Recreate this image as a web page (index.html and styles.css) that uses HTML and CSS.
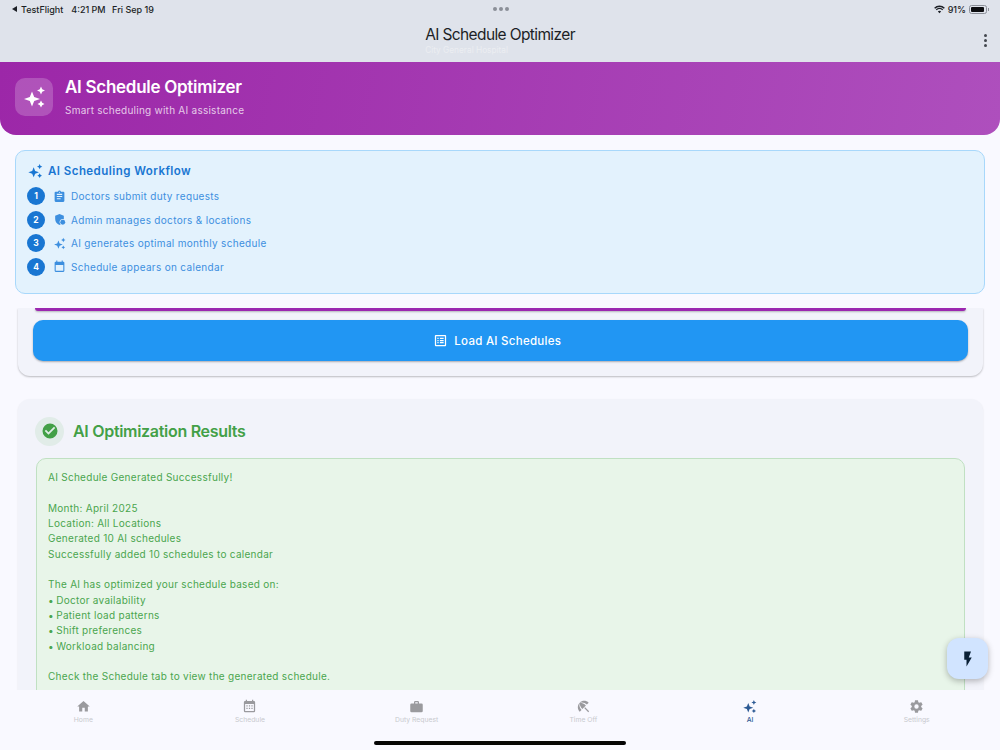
FILE: index.html
```html
<!DOCTYPE html>
<html lang="en">
<head>
<meta charset="utf-8">
<title>AI Schedule Optimizer</title>
<link rel="stylesheet" href="styles.css">
</head>
<body>
<div class="app">
  <header class="appbar">
    <div class="status">
      <div class="status-left"><span class="back-tri"></span><span>TestFlight</span><span class="gap-time">4:21 PM</span><span class="gap-date">Fri Sep 19</span></div>
      <div class="dots"><i></i><i></i><i></i></div>
      <div class="status-right">
        <svg class="wifi" viewBox="0 0 16 12" width="11" height="9"><path d="M8 11.5 5.6 8.9a3.4 3.4 0 0 1 4.8 0L8 11.500zM3.900 7.200a5.800 5.800 0 0 1 8.200 0l1.300-1.400a7.700 7.700 0 0 0-10.800 0zM.2 3.500l1.500 1.500a8.900 8.900 0 0 1 12.600 0l1.500-1.500a11 11 0 0 0-15.600 0z" fill="#1c1f26"/></svg>
        <span>91%</span>
        <span class="battery"><span class="battery-fill"></span></span><span class="battery-cap"></span>
      </div>
    </div>
    <div class="titlebar">
      <div class="title-stack">
        <div class="title">AI Schedule Optimizer</div>
        <div class="subtitle">City General Hospital</div>
      </div>
      <div class="more"><i></i><i></i><i></i></div>
    </div>
  </header>

  <section class="hero">
    <div class="hero-icon">
      <svg viewBox="0 0 24 24" width="24" height="24"><use href="#sparkle"/></svg>
    </div>
    <div>
      <h1 class="hero-title">AI Schedule Optimizer</h1>
      <p class="hero-sub">Smart scheduling with AI assistance</p>
    </div>
  </section>

  <section class="workflow">
    <div class="wf-head">
      <svg class="wf-head-icon" viewBox="0 0 24 24" width="16" height="16"><use href="#sparkle"/></svg>
      <h2 class="wf-title">AI Scheduling Workflow</h2>
    </div>
    <ul class="wf-list">
      <li class="wf-row"><span class="num">1</span>
        <svg class="wf-icon" viewBox="0 0 24 24" width="13" height="13"><path d="M19 3h-4.200a3 3 0 0 0-5.600 0H5a2 2 0 0 0-2 2v15a2 2 0 0 0 2 2h14a2 2 0 0 0 2-2V5a2 2 0 0 0-2-2zm-7 0a1 1 0 1 1 0 2 1 1 0 0 1 0-2zm2 14H7v-2h7zm3-4H7v-2h10zm0-4H7V7h10z"/></svg>
        <span>Doctors submit duty requests</span></li>
      <li class="wf-row"><span class="num">2</span>
        <svg class="wf-icon" viewBox="0 0 24 24" width="13" height="13"><path d="M12 2 4 5v6c0 5 3.400 9.700 8 11 .9-.3 1.700-.7 2.500-1.200A6 6 0 0 1 12 17a6 6 0 0 1 8-5.600V5z"/><circle cx="18" cy="17" r="4.500"/></svg>
        <span>Admin manages doctors &amp; locations</span></li>
      <li class="wf-row"><span class="num">3</span>
        <svg class="wf-icon" viewBox="0 0 24 24" width="13" height="13"><use href="#sparkle"/></svg>
        <span>AI generates optimal monthly schedule</span></li>
      <li class="wf-row"><span class="num">4</span>
        <svg class="wf-icon" viewBox="0 0 24 24" width="13" height="13"><path d="M19 3h-1V1h-2v2H8V1H6v2H5a2 2 0 0 0-2 2v15a2 2 0 0 0 2 2h14a2 2 0 0 0 2-2V5a2 2 0 0 0-2-2zm0 17H5V9h14z"/></svg>
        <span>Schedule appears on calendar</span></li>
    </ul>
  </section>

  <main class="scroller">
    <div class="controls-card">
      <div class="purple-btn"></div>
      <button class="load-btn">
        <svg viewBox="0 0 24 24" width="15" height="15"><path d="M4.500 3h15A1.500 1.500 0 0 1 21 4.500v15a1.500 1.500 0 0 1-1.500 1.500h-15A1.500 1.500 0 0 1 3 19.500v-15A1.500 1.500 0 0 1 4.500 3zM5 5v14h14V5zm2 2.500h2v2H7zm4 0h6v2h-6zM7 11h2v2H7zm4 0h6v2h-6zm-4 3.500h2v2H7zm4 0h6v2h-6z" fill="#fff" fill-rule="evenodd"/></svg>
        <span>Load AI Schedules</span>
      </button>
    </div>
    <div class="results-card">
      <div class="results-head">
        <span class="check-wrap">
          <svg viewBox="0 0 24 24" width="18" height="18"><path d="M12 2a10 10 0 1 0 0 20 10 10 0 0 0 0-20zm-2 15-5-5 1.700-1.700L10 13.600l7.300-7.300L19 8z" fill="#43a047"/></svg>
        </span>
        <h2 class="results-title">AI Optimization Results</h2>
      </div>
      <div class="results-box">
        <p>AI Schedule Generated Successfully!</p>
        <p class="blank"></p>
        <p>Month: April 2025</p>
        <p>Location: All Locations</p>
        <p>Generated 10 AI schedules</p>
        <p>Successfully added 10 schedules to calendar</p>
        <p class="blank"></p>
        <p>The AI has optimized your schedule based on:</p>
        <p><span class="bullet">•</span> Doctor availability</p>
        <p><span class="bullet">•</span> Patient load patterns</p>
        <p><span class="bullet">•</span> Shift preferences</p>
        <p><span class="bullet">•</span> Workload balancing</p>
        <p class="blank"></p>
        <p>Check the Schedule tab to view the generated schedule.</p>
      </div>
    </div>
  </main>

  <nav class="tabs">
    <div class="tab">
      <svg viewBox="0 0 24 24" width="15" height="15"><path d="M10 20v-6h4v6h5v-8h3L12 3 2 12h3v8z"/></svg>
      <span>Home</span></div>
    <div class="tab">
      <svg viewBox="0 0 24 24" width="15" height="15"><path d="M19 3h-1V1h-2v2H8V1H6v2H5a2 2 0 0 0-2 2v14a2 2 0 0 0 2 2h14a2 2 0 0 0 2-2V5a2 2 0 0 0-2-2zm0 16H5V8h14zM7 10h2v2H7zm4 0h2v2h-2zm4 0h2v2h-2zm-8 4h2v2H7zm4 0h2v2h-2zm4 0h2v2h-2z"/></svg>
      <span>Schedule</span></div>
    <div class="tab">
      <svg viewBox="0 0 24 24" width="15" height="15"><path d="M20 7h-4V5a2 2 0 0 0-2-2h-4a2 2 0 0 0-2 2v2H4a2 2 0 0 0-2 2v10a2 2 0 0 0 2 2h16a2 2 0 0 0 2-2V9a2 2 0 0 0-2-2zM10 5h4v2h-4z"/></svg>
      <span>Duty Request</span></div>
    <div class="tab">
      <svg viewBox="0 0 24 24" width="15" height="15"><path d="m13.130 14.560 1.430-1.430 6.440 6.440L19.570 21zM17.420 8.830l2.860-2.860C16.340 2 9.930 2 5.980 5.950c3.930-1.300 8.310-.25 11.440 2.880zM5.950 5.980C2 9.930 2 16.340 5.970 20.280l2.860-2.860C5.700 14.290 4.650 9.910 5.950 5.980zM5.970 5.960c-.5 3 1.060 6.880 4.180 10.010l5.730-5.730C12.750 7.120 8.900 5.480 5.970 5.960z"/></svg>
      <span>Time Off</span></div>
    <div class="tab tab-active">
      <svg viewBox="0 0 24 24" width="15" height="15"><use href="#sparkle"/></svg>
      <span>AI</span></div>
    <div class="tab">
      <svg viewBox="0 0 24 24" width="15" height="15"><path d="M19.430 12.980c.04-.32.07-.64.07-.98s-.03-.66-.07-.98l2.110-1.650a.5.5 0 0 0 .12-.64l-2-3.460a.5.5 0 0 0-.61-.22l-2.490 1a7.300 7.300 0 0 0-1.690-.98l-.38-2.650A.49.49 0 0 0 14 2h-4a.49.49 0 0 0-.49.42l-.38 2.650c-.61.25-1.170.59-1.690.98l-2.490-1a.5.5 0 0 0-.61.22l-2 3.460a.49.49 0 0 0 .12.64l2.110 1.650c-.04.32-.07.65-.07.98s.03.66.07.98l-2.110 1.650a.5.5 0 0 0-.12.64l2 3.460c.12.22.39.3.61.22l2.490-1c.52.4 1.080.73 1.690.98l.38 2.650c.03.24.24.42.49.42h4c.25 0 .46-.18.49-.42l.38-2.650c.61-.25 1.170-.59 1.690-.98l2.490 1c.23.09.49 0 .61-.22l2-3.460a.5.5 0 0 0-.12-.64zM12 15.500a3.500 3.500 0 1 1 0-7 3.500 3.500 0 0 1 0 7z"/></svg>
      <span>Settings</span></div>
  </nav>

  <button class="fab" aria-label="Quick action">
    <svg viewBox="0 0 24 24" width="18" height="18"><path d="M7 2v11h3v9l7-12h-4l3-8z" fill="#0a2036"/></svg>
  </button>
  <div class="home-bar"></div>
</div>

<svg class="defs" width="0" height="0" aria-hidden="true">
  <symbol id="sparkle" viewBox="0 0 24 24">
    <path d="M10 6.500 12.200 12 18 14l-5.800 2L10 21.500 7.800 16 2 14l5.800-2zM19 1.500l1.200 2.800L23 5.500l-2.800 1.200L19 9.500l-1.200-2.800L15 5.500l2.800-1.200zM19 15.500l1.200 2.300 2.300 1.200-2.300 1.200L19 22.500l-1.200-2.300-2.300-1.200 2.300-1.200z"/>
  </symbol>
</svg>
</body>
</html>
```

FILE: styles.css
```css
* { box-sizing: border-box; }
html, body { margin: 0; padding: 0; }
body {
  width: 1000px;
  height: 750px;
  overflow: hidden;
  font-family: Inter, "Liberation Sans", sans-serif;
  background: #f9f9ff;
}
.defs { position: absolute; }
h1, h2, p, ul { margin: 0; padding: 0; }
ul { list-style: none; }

.app {
  position: relative;
  width: 1000px;
  height: 750px;
  display: flex;
  flex-direction: column;
  background: #f9f9ff;
}

/* App bar */
.appbar {
  height: 62px;
  flex: none;
  background: #dfe3eb;
  display: flex;
  flex-direction: column;
}
.status {
  height: 18px;
  padding: 0 11px 0 12px;
  display: grid;
  grid-template-columns: 1fr auto 1fr;
  align-items: center;
  font-size: 9px;
  font-weight: 500;
  color: #1c1f26;
}
.status-left { display: flex; align-items: center; }
.back-tri {
  width: 0;
  height: 0;
  border-style: solid;
  border-width: 3px 5px 3px 0;
  border-color: transparent #1c1f26 transparent transparent;
  margin-right: 4px;
}
.gap-time { margin-left: 8px; }
.gap-date { margin-left: 6.500px; }
.dots { display: flex; gap: 2px; }
.dots i { width: 4px; height: 4px; border-radius: 50%; background: #8b8f98; }
.status-right { display: flex; align-items: center; justify-content: flex-end; gap: 3px; }
.battery {
  width: 18px;
  height: 9px;
  border: 1px solid #8b8f98;
  border-radius: 2.500px;
  padding: 1px;
  display: block;
}
.battery-fill { display: block; width: 90%; height: 100%; background: #0c0d10; border-radius: 1px; }
.battery-cap { width: 1px; height: 3px; background: #8b8f98; margin-left: -2px; }

.titlebar {
  flex: 1;
  display: flex;
  justify-content: center;
  position: relative;
  padding-top: 7px;
}
.title-stack { display: flex; flex-direction: column; }
.title { font-size: 15.500px; line-height: 20px; letter-spacing: -.62px; color: #1c1f26; }
.subtitle { font-size: 8.300px; line-height: 11px; color: #eceef2; margin-top: 0; }
.more {
  position: absolute;
  right: 13.500px;
  top: 16px;
  display: flex;
  flex-direction: column;
  gap: 2px;
}
.more i { width: 3px; height: 3px; border-radius: 50%; background: #43474e; }

/* Hero */
.hero {
  height: 73px;
  flex: none;
  background: linear-gradient(100deg, #9c27a8, #ae4fbd);
  border-radius: 0 0 16px 16px;
  padding: 0 15px 4px;
  display: flex;
  align-items: center;
  gap: 12px;
}
.hero-icon {
  width: 38px;
  height: 38px;
  border-radius: 10px;
  background: rgba(255, 255, 255, .2);
  display: flex;
  align-items: center;
  justify-content: center;
  color: #fff;
  fill: #fff;
}
.hero-title { font-size: 17px; line-height: 23px; font-weight: 600; letter-spacing: -.28px; color: #fff; }
.hero-sub { font-size: 10px; line-height: 14px; margin-top: 4px; letter-spacing: .25px; color: rgba(255, 255, 255, .75); }

/* Workflow */
.workflow {
  flex: none;
  height: 144px;
  margin: 15px 15px 14px;
  padding: 11px 11px;
  background: #e3f2fd;
  border: 1px solid #a8d8fb;
  border-radius: 10px;
}
.wf-head { display: flex; align-items: center; gap: 5px; height: 18px; }
.wf-head-icon { fill: #1976d2; }
.wf-title { font-size: 11.500px; font-weight: 600; letter-spacing: .45px; color: #1976d2; }
.wf-list { margin-top: 7.500px; display: flex; flex-direction: column; gap: 6px; }
.wf-row {
  display: flex;
  align-items: center;
  height: 17.500px;
  font-size: 10px;
  letter-spacing: .32px;
  color: #3d8fdf;
}
.num {
  width: 18px;
  height: 18px;
  margin-right: 8px;
  border-radius: 50%;
  background: #1976d2;
  color: #fff;
  font-size: 8.500px;
  font-weight: 700;
  letter-spacing: 0;
  display: flex;
  align-items: center;
  justify-content: center;
  flex: none;
}
.wf-icon { fill: #3d8fdf; margin-right: 5px; flex: none; }

/* Scrolling region */
.scroller { flex: 1; min-height: 0; overflow: hidden; padding: 0 17.500px 0 18px; }
.controls-card {
  height: 68px;
  background: #f2f3fa;
  border-radius: 0 0 12px 12px;
  box-shadow: 0 1px 2px rgba(0, 0, 0, .25);
  padding: 0 14.500px;
}
.purple-btn {
  height: 3px;
  margin: 0 2px;
  background: #9c27b0;
  border-radius: 0 0 6px 6px;
  box-shadow: 0 1px 2px rgba(0, 0, 0, .25);
}
.load-btn {
  width: 100%;
  height: 41px;
  margin-top: 9px;
  border: 0;
  padding: 0 6px 0 0;
  border-radius: 10px;
  background: #2196f3;
  box-shadow: 0 1px 2px rgba(0, 0, 0, .3);
  display: flex;
  align-items: center;
  justify-content: center;
  gap: 6px;
  font-family: inherit;
  font-size: 11.500px;
  font-weight: 500;
  letter-spacing: .27px;
  color: #fff;
}
.results-card {
  margin-top: 23px;
  height: 320px;
  background: #f2f3fa;
  border-radius: 12px;
  box-shadow: 0 1px 2px rgba(0, 0, 0, .1);
  padding: 17px 17.500px 0 18px;
}
.results-head { display: flex; align-items: center; gap: 9px; height: 30px; }
.check-wrap {
  width: 29px;
  height: 29px;
  margin-left: -1px;
  border-radius: 50%;
  background: #e1ece8;
  display: flex;
  align-items: center;
  justify-content: center;
}
.results-title { font-size: 16px; font-weight: 600; letter-spacing: -.3px; color: #43a047; }
.results-box {
  margin-top: 12px;
  height: 300px;
  padding: 11px 11px;
  background: #e8f5e9;
  border: 1px solid #c0e0c2;
  border-radius: 10px;
  font-size: 10px;
  line-height: 15.350px;
  letter-spacing: .28px;
  color: #4aa54e;
}
.results-box .blank { height: 15.350px; }
.bullet { letter-spacing: -.5px; }

/* Bottom tabs */
.tabs {
  flex: none;
  height: 60px;
  background: #f9f9ff;
  display: grid;
  grid-template-columns: repeat(6, 1fr);
  position: relative;
}
.tab {
  display: flex;
  flex-direction: column;
  align-items: center;
  padding-top: 9px;
  gap: 1px;
  font-size: 6.800px;
  color: #c8c9ce;
  fill: #9a9a9e;
}
.tab-active { color: #2c5a94; fill: #2c5a94; font-weight: 500; }

/* Floating */
.fab {
  position: absolute;
  left: 947px;
  top: 638px;
  width: 41px;
  height: 41px;
  border: 0;
  padding: 0;
  border-radius: 12px;
  background: #d1e4ff;
  box-shadow: 0 2px 6px rgba(0, 0, 0, .28);
  display: flex;
  align-items: center;
  justify-content: center;
}
.home-bar {
  position: absolute;
  left: 374px;
  top: 741px;
  width: 252px;
  height: 3.500px;
  border-radius: 2px;
  background: #050505;
}
```
